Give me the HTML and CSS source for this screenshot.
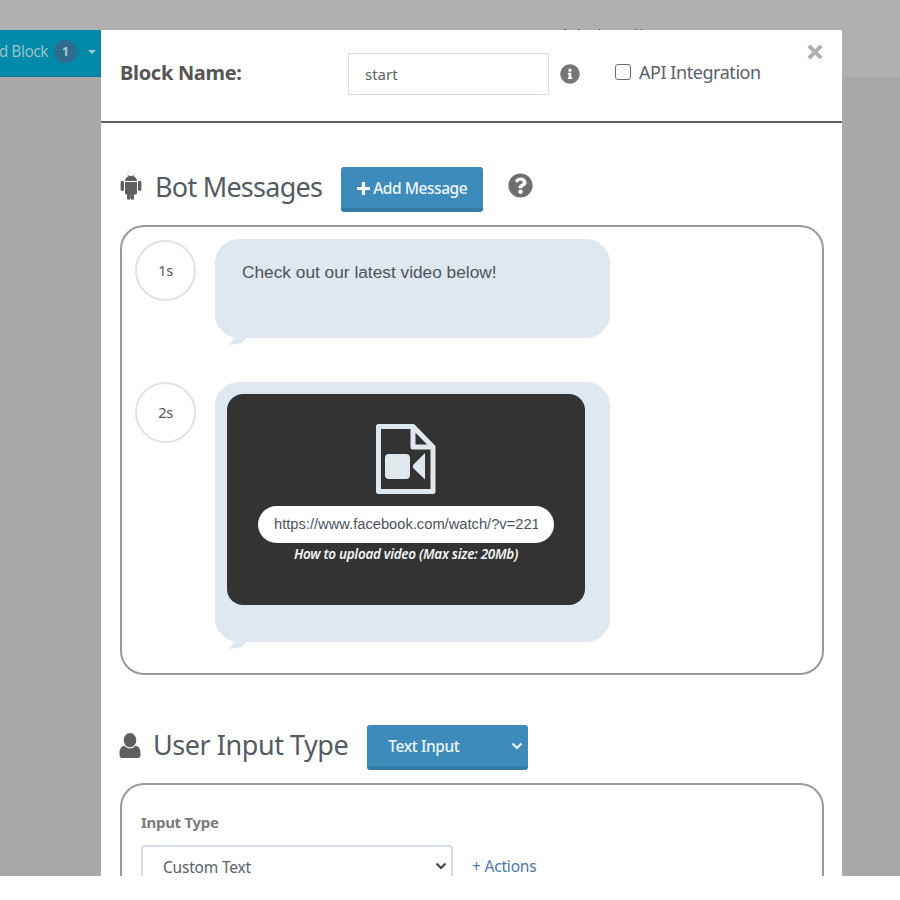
FILE: index.html
```html
<!DOCTYPE html>
<html lang="en">
<head>
<meta charset="utf-8">
<title>Block editor</title>
<link rel="stylesheet" href="styles.css">
</head>
<body>
<div class="stage">
  <aside class="left">
    <div class="add-block">
      <span class="add-label">d Block</span>
      <span class="badge">1</span>
      <span class="caret"></span>
    </div>
  </aside>
  <main class="modal">
    <header class="modal-head">
      <label class="block-label">Block Name:</label>
      <div class="name-input">start</div>
      <svg class="info-icon" viewBox="0 0 512 512"><path d="M256 8C119.043 8 8 119.083 8 256c0 136.997 111.043 248 248 248s248-111.003 248-248C504 119.083 392.957 8 256 8zm0 110c23.196 0 42 18.804 42 42s-18.804 42-42 42-42-18.804-42-42 18.804-42 42-42zm56 254c0 6.627-5.373 12-12 12h-88c-6.627 0-12-5.373-12-12v-24c0-6.627 5.373-12 12-12h12v-64h-12c-6.627 0-12-5.373-12-12v-24c0-6.627 5.373-12 12-12h64c6.627 0 12 5.373 12 12v100h12c6.627 0 12 5.373 12 12v24z"/></svg>
      <span class="checkbox"></span>
      <span class="api-label">API Integration</span>
      <svg class="close-icon" viewBox="0 0 16 16"><path d="M2.500 2.500l11 11M13.500 2.500l-11 11"/></svg>
    </header>
    <section class="modal-body">
      <div class="section-title bot-title">
        <svg class="android-icon" viewBox="0 0 24 30" preserveAspectRatio="none"><path d="M1.600 10.200a1.700 1.700 0 0 1 3.400 0v8a1.700 1.700 0 0 1-3.400 0zM19 10.200a1.700 1.700 0 0 1 3.400 0v8a1.700 1.700 0 0 1-3.400 0zM6 10h12v12.500a1.500 1.500 0 0 1-1.500 1.500H15v4a1.700 1.700 0 0 1-3.400 0v-4h-.2v4a1.700 1.700 0 0 1-3.400 0v-4H7.500A1.500 1.500 0 0 1 6 22.500zM6 9c.1-2.400 1.400-4.300 3.400-5.300L8.300 1.600l.5-.3 1.200 2.100a7.200 7.200 0 0 1 4 0l1.200-2.100.5.3-1.100 2.100c2 1 3.300 2.900 3.400 5.300z"/></svg>
        <h2 class="title-text">Bot Messages</h2>
        <button class="add-message"><svg class="plus-icon" viewBox="0 0 14 14"><path d="M5.300 0h3.400v5.300H14v3.400H8.700V14H5.300V8.700H0V5.300h5.300z"/></svg>Add Message</button>
        <svg class="help-icon" viewBox="0 0 512 512"><path d="M504 256c0 136.997-111.043 248-248 248S8 392.997 8 256C8 119.083 119.043 8 256 8s248 111.083 248 248zM262.655 90c-54.497 0-89.255 22.957-116.549 63.758-3.536 5.286-2.353 12.415 2.715 16.258l34.699 26.310c5.205 3.947 12.621 3.008 16.665-2.122 17.864-22.658 30.113-35.797 57.303-35.797 20.429 0 45.698 13.148 45.698 32.958 0 14.976-12.363 22.667-32.534 33.976C247.128 238.528 216 254.941 216 296v4c0 6.627 5.373 12 12 12h56c6.627 0 12-5.373 12-12v-1.333c0-28.462 83.186-29.647 83.186-106.667 0-58.002-60.165-102-116.531-102zM256 338c-25.365 0-46 20.635-46 46 0 25.364 20.635 46 46 46s46-20.636 46-46c0-25.365-20.635-46-46-46z"/></svg>
      </div>
      <div class="panel messages-panel">
        <div class="message-row">
          <div class="delay first-delay">1s</div>
          <div class="bubble text-bubble">Check out our latest video below!</div>
        </div>
        <div class="message-row">
          <div class="delay">2s</div>
          <div class="bubble video-bubble">
            <div class="video-card">
              <svg class="file-icon" viewBox="0 0 60 70"><path class="file-outline" d="M2.500 2.500H37L57 23v44.500H2.500zM37 2.500V23h20"/><path class="file-fill" d="M13 30h17a4 4 0 0 1 4 4v17a4 4 0 0 1-4 4H13a4 4 0 0 1-4-4V34a4 4 0 0 1 4-4zM37 41l12-12v26.500L37 44z"/></svg>
              <div class="url-input"><span class="url-text">https://www.facebook.com/watch/?v=221</span></div>
              <p class="video-hint">How to upload video (Max size: 20Mb)</p>
            </div>
          </div>
        </div>
      </div>
      <div class="section-title user-title">
        <svg class="user-icon" viewBox="0 0 22 24" preserveAspectRatio="none"><path d="M11 1a6.200 6.200 0 0 1 6.200 6.500c0 3.600-2.700 6.500-6.200 6.500S4.800 11.100 4.800 7.500A6.200 6.200 0 0 1 11 1zM5.500 12.800C7 14.300 8.900 15.200 11 15.200s4-.9 5.500-2.400c3.200.2 5 2.900 5 6.700v1.700c0 1.600-1.200 2.800-2.800 2.800H3.300C1.700 24 .5 22.800.5 21.200v-1.700c0-3.800 1.800-6.500 5-6.700z"/></svg>
        <h2 class="title-text">User Input Type</h2>
        <div class="type-select">
          <span>Text Input</span>
          <svg class="chev" viewBox="0 0 12 8"><path d="M1.500 1.500L6 6l4.500-4.500"/></svg>
        </div>
      </div>
      <div class="panel input-panel">
        <div class="field-label">Input Type</div>
        <div class="field-row">
          <div class="custom-select">
            <span>Custom Text</span>
            <svg class="chev dark" viewBox="0 0 12 8"><path d="M1.500 1.500L6 6l4.500-4.500"/></svg>
          </div>
          <a class="actions-link">+ Actions</a>
        </div>
      </div>
    </section>
  </main>
  <div class="behind-text">Ada ln adir</div>
</div>
</body>
</html>
```
FILE: styles.css
```css
* { box-sizing: border-box; }
html, body { margin: 0; background: #fff; }
body { font-family: "Noto Sans", sans-serif; color: #555; }
.stage {
  position: relative;
  display: grid;
  grid-template-columns: 101px 741px 58px;
  width: 900px;
  height: 876px;
  overflow: hidden;
  background: linear-gradient(#b0b0b0 77px, #aaa9a7 77px);
}
.left { position: relative; }
.add-block {
  position: absolute;
  left: 0;
  top: 30px;
  width: 101px;
  height: 47px;
  display: flex;
  align-items: flex-start;
  justify-content: flex-end;
  padding: 9px 5px 0 0;
  background: #008aa9;
  border-bottom: 1px solid #0a7d97;
  color: #9fbfc7;
  font-size: 15.500px;
  line-height: 24px;
  white-space: nowrap;
}
.add-label { letter-spacing: -0.500px; margin-right: 6px; }
.badge {
  flex: none;
  width: 23px;
  height: 23px;
  margin-top: 1px;
  border-radius: 50%;
  background: #2f6c90;
  color: #b6c8d2;
  font-size: 12px;
  font-weight: 700;
  line-height: 23px;
  text-align: center;
}
.caret {
  flex: none;
  margin: 11px 0 0 11px;
  border-left: 4.500px solid transparent;
  border-right: 4.500px solid transparent;
  border-top: 4.500px solid #a2c6cf;
}
.modal {
  position: relative;
  z-index: 1;
  margin-top: 30px;
  background: #fff;
}
.modal-head {
  position: relative;
  display: flex;
  align-items: flex-start;
  height: 93px;
  border-bottom: 2px solid #626262;
}
.block-label {
  width: 228px;
  margin: 30px 0 0 19px;
  font-size: 20px;
  font-weight: 700;
  line-height: 26px;
  letter-spacing: -0.300px;
  color: #555;
}
.name-input {
  width: 201px;
  height: 42px;
  padding: 0 16px;
  margin-top: 23px;
  border: 1px solid #d5dcea;
  font-size: 15px;
  line-height: 40px;
  color: #5f5f5f;
}
.info-icon {
  width: 20px;
  height: 20px;
  margin: 34px 0 0 11px;
  fill: #777;
}
.checkbox {
  width: 16px;
  height: 16px;
  margin: 34px 0 0 35px;
  border: 1px solid #6f6f6f;
  border-radius: 3px;
  background: #fff;
}
.api-label {
  margin: 30px 0 0 8px;
  font-size: 18px;
  line-height: 24px;
  letter-spacing: -0.450px;
  color: #5b6068;
}
.close-icon {
  position: absolute;
  right: 18px;
  top: 13px;
  width: 18px;
  height: 18px;
  fill: none;
  stroke: #b1b1b1;
  stroke-width: 3.600;
}
.modal-body { padding: 0 19px 0 18px; }
.section-title { display: flex; align-items: center; }
.bot-title { height: 45px; margin-top: 44px; }
.android-icon { width: 24px; height: 27px; margin-bottom: 6px; fill: #5f5f5f; flex: none; }
.title-text {
  margin: 0;
  font-size: 27px;
  font-weight: 400;
  line-height: 36px;
  color: #555b63;
  white-space: nowrap;
}
.bot-title .title-text { margin: 0 0 6px 12px; letter-spacing: -0.750px; }
.add-message {
  display: flex;
  align-items: center;
  width: 142px;
  height: 45px;
  margin-left: 19px;
  padding: 1px 0 0 16px;
  border: 0;
  border-bottom: 4px solid #357ba5;
  border-radius: 3px;
  background: #3d8bbb;
  color: #eef5f9;
  font-family: inherit;
  font-size: 15.500px;
  font-weight: 500;
  letter-spacing: -0.450px;
  white-space: nowrap;
}
.plus-icon { width: 13px; height: 13px; margin-right: 3px; fill: #fff; }
.help-icon { width: 25px; height: 25px; margin: 0 0 8px 25px; fill: #6f6f6f; }
.panel {
  margin: 13px 0 0 1px;
  width: 704px;
  border: 2px solid #999;
  border-radius: 24px;
  background: #fff;
}
.messages-panel { height: 450px; padding: 12px 0 0 13px; }
.message-row { display: flex; align-items: flex-start; }
.delay {
  width: 61px;
  height: 61px;
  flex: none;
  border: 2px solid #e2e2e2;
  border-radius: 50%;
  font-size: 14.500px;
  line-height: 57px;
  text-align: center;
  letter-spacing: -0.300px;
  color: #555;
}
.first-delay { margin-top: 1px; }
.bubble {
  position: relative;
  width: 395px;
  margin-left: 19px;
  border-radius: 24px;
  background: #dfe7ef;
}
.bubble::after {
  content: "";
  position: absolute;
  left: 14px;
  bottom: -7px;
  width: 18px;
  height: 8px;
  background: #dfe7ef;
  clip-path: polygon(30% 0, 100% 0, 85% 50%, 55% 85%, 0 100%, 20% 40%);
}
.text-bubble {
  height: 99px;
  margin-bottom: 44px;
  padding: 22px 27px;
  font-family: "Liberation Sans", sans-serif;
  font-size: 17.300px;
  line-height: 22px;
  color: #4c535e;
}
.video-bubble { height: 260px; padding: 12px 25px 0 12px; }
.video-card {
  display: flex;
  flex-direction: column;
  align-items: center;
  height: 211px;
  padding-top: 30px;
  border-radius: 16px;
  background: #333;
}
.file-icon { width: 60px; height: 70px; flex: none; }
.file-outline { fill: none; stroke: #dfe7ef; stroke-width: 5; stroke-linejoin: round; }
.file-fill { fill: #dfe7ef; }
.url-input {
  width: 296px;
  height: 37px;
  margin-top: 12px;
  padding: 0 0 0 16px;
  border-radius: 19px;
  background: #fff;
  overflow: hidden;
  font-family: "Liberation Sans", sans-serif;
  font-size: 14.700px;
  line-height: 37px;
  color: #4c535e;
}
.url-text { display: block; width: 264px; overflow: hidden; white-space: nowrap; }
.video-hint {
  margin: 2px 0 0;
  font-size: 13.500px;
  font-style: italic;
  font-weight: 600;
  line-height: 18px;
  letter-spacing: -0.300px;
  color: #f2f4f6;
  white-space: nowrap;
}
.user-title { height: 45px; margin-top: 50px; }
.user-icon { width: 22px; height: 26px; fill: #5f5f5f; flex: none; margin-bottom: 5px; }
.user-title .title-text { margin: 0 0 6px 12px; letter-spacing: -0.450px; }
.type-select {
  display: flex;
  align-items: center;
  justify-content: space-between;
  width: 161px;
  height: 45px;
  margin-left: 19px;
  padding: 0 5px 0 21px;
  border-bottom: 4px solid #357ba5;
  border-radius: 3px;
  background: #3d8bbb;
  color: #eef5f9;
  font-size: 15.500px;
  font-weight: 500;
  letter-spacing: -0.400px;
}
.chev { width: 12px; height: 8px; fill: none; stroke: #eef5f9; stroke-width: 2.200; }
.chev.dark { stroke: #444; margin-top: -3px; }
.input-panel { height: 120px; padding: 27px 19px 0; }
.field-label {
  font-size: 15px;
  font-weight: 700;
  line-height: 20px;
  letter-spacing: -0.300px;
  color: #7b7b7b;
}
.field-row { display: flex; align-items: flex-start; margin-top: 13px; }
.custom-select {
  display: flex;
  align-items: center;
  justify-content: space-between;
  width: 312px;
  height: 44px;
  padding: 0 4px 0 20px;
  border: 2px solid #d5dcea;
  border-radius: 4px;
  font-size: 15.500px;
  line-height: 16px;
  letter-spacing: -0.200px;
  color: #5b6068;
}
.actions-link {
  margin: 11px 0 0 19px;
  font-size: 15.500px;
  line-height: 20px;
  letter-spacing: -0.200px;
  color: #4b79ab;
}
.behind-text {
  position: absolute;
  left: 560px;
  top: 24px;
  font-size: 16px;
  line-height: 22px;
  letter-spacing: 1px;
  color: #555;
}
```
